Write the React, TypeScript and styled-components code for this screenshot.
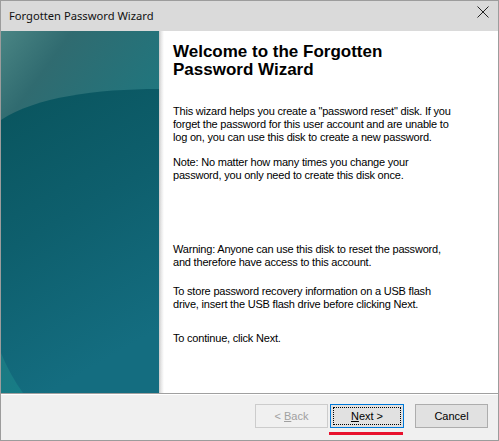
import React from 'react'
import styled, { createGlobalStyle } from 'styled-components'

const GlobalStyle = createGlobalStyle`
  html, body {
    margin: 0;
    padding: 0;
    background: #ffffff;
  }
`

const Window = styled.div`
  width: 499px;
  height: 441px;
  box-sizing: border-box;
  border: 1px solid #9c9c9c;
  display: flex;
  flex-direction: column;
  background: #f0f0f0;
  overflow: hidden;
`

const TitleBar = styled.div`
  height: 30px;
  flex: none;
  display: flex;
  align-items: center;
  justify-content: space-between;
  background: #dadada;
  padding: 0 8px;
`

const TitleText = styled.span`
  font-family: 'Noto Sans', 'Liberation Sans', sans-serif;
  font-size: 11.2px;
  line-height: 16px;
  color: #111111;
`

const CloseButton = styled.div`
  width: 12px;
  height: 12px;
  margin-right: 1px;
  margin-bottom: 8px;
  display: flex;
`

const Body = styled.div`
  height: 362px;
  flex: none;
  display: flex;
  background: #ffffff;
`

const SidePanel = styled.div`
  width: 158px;
  flex: none;
  display: flex;
`

const Shade = styled.div`
  width: 5px;
  flex: none;
  background: linear-gradient(to right, #c9c9c9, #e6e6e6 40%, #ffffff);
`

const Content = styled.div`
  flex: 1;
  padding: 12px 0 0 9px;
  color: #000000;
`

const Heading = styled.h1`
  margin: 0;
  font-family: 'Liberation Sans', Arial, sans-serif;
  font-size: 17px;
  font-weight: bold;
  line-height: 18px;
`

const Para = styled.p<{ $gap: number }>`
  margin: ${p => p.$gap}px 0 0 0;
  font-family: 'Liberation Sans', Arial, sans-serif;
  font-size: 11px;
  line-height: 13px;
  letter-spacing: -0.2px;
`

const Line = styled.span`
  display: block;
  white-space: nowrap;
`

const Footer = styled.div`
  flex: 1;
  display: flex;
  justify-content: flex-end;
  align-items: flex-start;
  padding: 10px 10px 0 0;
  border-top: 1px solid #a0a0a0;
  box-shadow: inset 0 1px #ffffff;
`

const Button = styled.button<{ $focused?: boolean; $wide?: boolean }>`
  width: ${p => (p.$wide ? 74 : 73)}px;
  height: 24px;
  box-sizing: border-box;
  padding: 0;
  font-family: 'Liberation Sans', Arial, sans-serif;
  font-size: 11px;
  color: ${p => (p.disabled ? '#a0a0a0' : '#000000')};
  background: ${p => (p.disabled ? '#f0f0f0' : '#e1e1e1')};
  border: 1px solid ${p => (p.disabled ? '#cccccc' : p.$focused ? '#0078d7' : '#adadad')};
  outline: ${p => (p.$focused ? '1px dotted #000000' : 'none')};
  outline-offset: -4px;
`

const Marked = styled.div`
  position: relative;
  display: flex;
  margin: 0 11px 0 2px;
  &::after {
    content: '';
    position: absolute;
    left: -1px;
    right: 1px;
    top: 28px;
    height: 3px;
    background: #e8112d;
  }
`

function Banner() {
  return (
    <svg width="158" height="362" viewBox="0 0 158 362">
      <defs>
        <linearGradient id="sky" x1="0" y1="0" x2="0.6" y2="1">
          <stop offset="0" stopColor="#4a8584" />
          <stop offset="0.2" stopColor="#306b70" />
          <stop offset="0.8" stopColor="#167d87" />
          <stop offset="1" stopColor="#14838b" />
        </linearGradient>
        <linearGradient id="orb" x1="0" y1="0" x2="0.3" y2="1">
          <stop offset="0" stopColor="#09545d" />
          <stop offset="0.5" stopColor="#0e5f6d" />
          <stop offset="1" stopColor="#146d80" />
        </linearGradient>
      </defs>
      <rect width="158" height="362" fill="url(#sky)" />
      <path
        d="M158,58 C95,58 35,66 0,89 L0,322 Q9,344 22,362 L158,362 Z"
        fill="url(#orb)"
      />
    </svg>
  )
}

export default function App() {
  return (
    <>
      <GlobalStyle />
      <Window>
        <TitleBar>
          <TitleText>Forgotten Password Wizard</TitleText>
          <CloseButton>
            <svg width="12" height="12" viewBox="0 0 12 12">
              <path d="M0.5 0.5 L11.5 11.5 M11.5 0.5 L0.5 11.5" stroke="#222" strokeWidth="1" />
            </svg>
          </CloseButton>
        </TitleBar>
        <Body>
          <SidePanel>
            <Banner />
          </SidePanel>
          <Shade />
          <Content>
            <Heading>
              <Line>Welcome to the Forgotten</Line>
              <Line>Password Wizard</Line>
            </Heading>
            <Para $gap={26}>
              <Line>This wizard helps you create a "password reset" disk. If you</Line>
              <Line>forget the password for this user account and are unable to</Line>
              <Line>log on, you can use this disk to create a new password.</Line>
            </Para>
            <Para $gap={12}>
              <Line>Note: No matter how many times you change your</Line>
              <Line>password, you only need to create this disk once.</Line>
            </Para>
            <Para $gap={61}>
              <Line>Warning: Anyone can use this disk to reset the password,</Line>
              <Line>and therefore have access to this account.</Line>
            </Para>
            <Para $gap={16}>
              <Line>To store password recovery information on a USB flash</Line>
              <Line>drive, insert the USB flash drive before clicking Next.</Line>
            </Para>
            <Para $gap={21}>
              <Line>To continue, click Next.</Line>
            </Para>
          </Content>
        </Body>
        <Footer>
          <Button disabled>
            &lt; <u>B</u>ack
          </Button>
          <Marked>
            <Button $focused $wide>
              <u>N</u>ext &gt;
            </Button>
          </Marked>
          <Button>Cancel</Button>
        </Footer>
      </Window>
    </>
  )
}
